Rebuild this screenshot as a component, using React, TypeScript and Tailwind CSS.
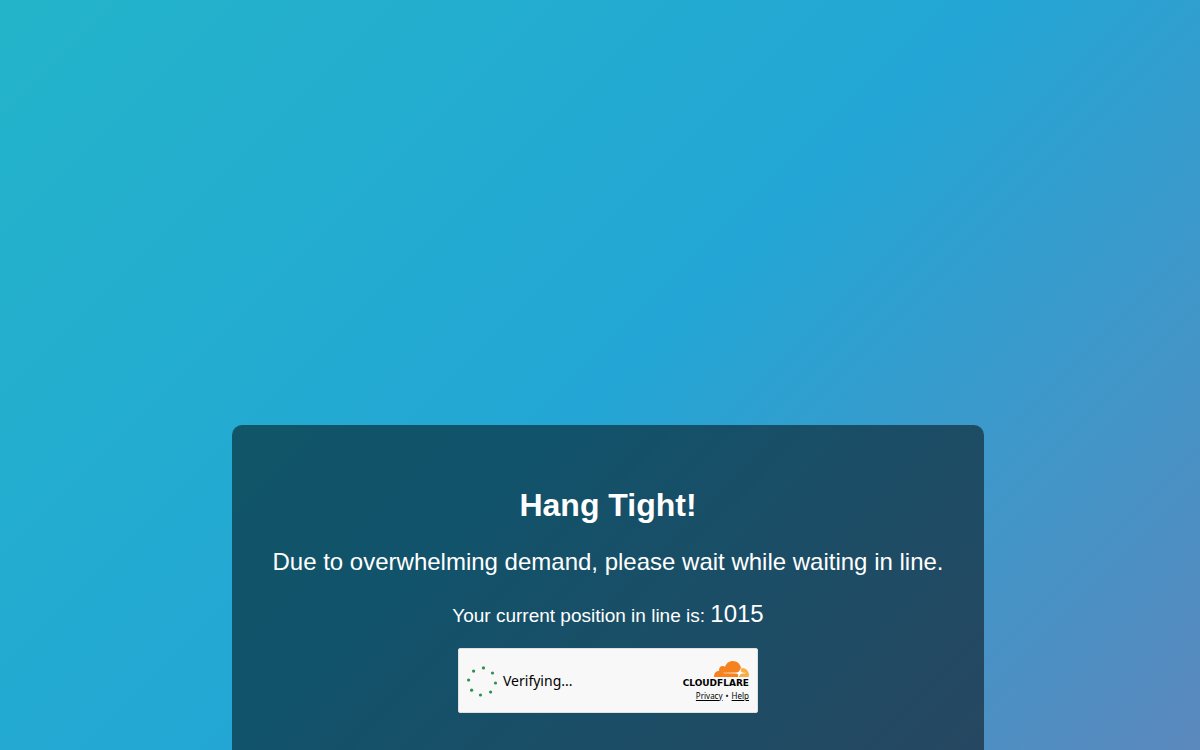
const dots: [number, number][] = [
  [16.5, 1.9],
  [25.5, 7],
  [28.5, 17],
  [23.6, 26],
  [13.5, 29],
  [4.6, 24.2],
  [1.6, 14],
  [6.6, 5.1],
];

function Spinner() {
  return (
    <svg width="30" height="30" viewBox="0 0 30 30" className="shrink-0 overflow-visible" aria-hidden="true">
      {dots.map(([x, y]) => (
        <circle key={`${x}-${y}`} cx={x} cy={y} r="1.6" fill="#2b9151" />
      ))}
    </svg>
  );
}

function CloudLogo() {
  return (
    <svg width="35" height="16" viewBox="38 0 35 16" aria-hidden="true">
      <path
        fill="#F6821F"
        d="M61.8848 15.7841L62.0632 15.1578C62.2758 14.4126 62.1967 13.7239 61.8401 13.2178C61.5118 12.7517 60.9649 12.4773 60.3007 12.4453L47.7201 12.2836C47.6811 12.2829 47.6428 12.2728 47.6083 12.2542C47.5738 12.2356 47.5442 12.209 47.5217 12.1766C47.4996 12.1431 47.4856 12.1049 47.4807 12.0649C47.4758 12.025 47.4801 11.9844 47.4933 11.9465C47.5149 11.8839 47.5541 11.8291 47.6061 11.7888C47.658 11.7486 47.7204 11.7247 47.7856 11.7201L60.4827 11.5566C61.9889 11.4864 63.6196 10.2462 64.1905 8.73372L64.9146 6.81361C64.9443 6.73242 64.951 6.64444 64.9341 6.55957C64.112 2.80652 60.8115 0 56.8652 0C53.2293 0 50.1421 2.38158 49.0347 5.69186C48.2864 5.12186 47.3535 4.85982 46.4228 4.95823C44.6785 5.13401 43.276 6.55928 43.1034 8.32979C43.059 8.77189 43.0915 9.21845 43.1992 9.64918C40.3497 9.73347 38.0645 12.1027 38.0645 15.0151C38.0649 15.2751 38.0838 15.5347 38.1212 15.7919C38.1294 15.8513 38.1584 15.9057 38.2029 15.9452C38.2474 15.9847 38.3044 16.0067 38.3635 16.0071L61.5894 16.0099C61.6616 16.0088 61.7252 15.9862 61.7772 15.9455C61.8293 15.9048 61.867 15.8481 61.8848 15.7841Z"
      />
      <path
        fill="#FBAD41"
        d="M66.0758 6.95285C65.9592 6.95285 65.843 6.95582 65.7274 6.96177C65.7087 6.96312 65.6904 6.96719 65.6729 6.97385C65.6426 6.98437 65.6152 7.00219 65.5931 7.02579C65.5711 7.04939 65.555 7.07806 65.5462 7.10936L65.0515 8.84333C64.8389 9.58847 64.918 10.2766 65.2749 10.7827C65.6029 11.2494 66.1498 11.5233 66.814 11.5552L69.4959 11.7186C69.5336 11.7199 69.5705 11.73 69.6037 11.7483C69.6369 11.7666 69.6654 11.7925 69.687 11.8239C69.7092 11.8576 69.7234 11.896 69.7283 11.9363C69.7332 11.9765 69.7288 12.0173 69.7153 12.0555C69.6937 12.118 69.6546 12.1727 69.6028 12.2129C69.5509 12.2531 69.4887 12.2771 69.4236 12.2819L66.6371 12.4453C65.1241 12.5161 63.4937 13.7558 62.9233 15.2682L62.722 15.8022C62.7136 15.8245 62.7105 15.8486 62.713 15.8724C62.7155 15.8961 62.7236 15.9189 62.7365 15.9389C62.7495 15.9589 62.7669 15.9754 62.7874 15.9873C62.8079 15.9991 62.831 16.0058 62.8546 16.0068H72.4502C72.506 16.0073 72.5604 15.9893 72.6051 15.9554C72.6498 15.9216 72.6823 15.8739 72.6977 15.8195C72.8677 15.2043 72.9535 14.5684 72.9529 13.9296C72.9517 10.0767 69.8732 6.95285 66.0758 6.95285Z"
      />
      <path fill="#fff" d="M63.6 9l.6 2.4 3 .6-3 .7-.9 2.6-.7-2.6-2.6-.7 2.7-.6Z" />
    </svg>
  );
}

function VerifyWidget() {
  return (
    <div className="mx-auto flex h-[65px] w-[300px] items-center justify-between rounded-xs border border-[#e0e0e0] bg-[#f8f8f8] px-2 font-['Noto_Sans',sans-serif] text-[#232323]">
      <div className="flex items-center gap-1.5" role="status">
        <Spinner />
        <span className="text-sm text-black">Verifying...</span>
      </div>
      <div className="flex flex-col items-end">
        <CloudLogo />
        <span className="mt-px font-['DejaVu_Sans',sans-serif] text-[9px] leading-[10px] font-bold text-black">
          CLOUDFLARE
        </span>
        <div className="mt-0.5 flex gap-[3px] text-[8px] leading-[11px] text-black">
          <a href="#privacy" className="underline">Privacy</a>
          <span>•</span>
          <a href="#help" className="underline">Help</a>
        </div>
      </div>
    </div>
  );
}

export default function App() {
  return (
    <div className="h-screen overflow-hidden bg-[linear-gradient(135deg,#23b4c9_0%,#23a6d5_51%,#5b88bd_100%)] pl-4 font-['Liberation_Sans',Arial,sans-serif] text-white">
      <main className="mx-auto mt-[425px] w-fit rounded-[10px] bg-black/50 px-10 pt-[62px] pb-16 text-center">
        <h1 className="text-[32px] leading-[37px] font-bold">Hang Tight!</h1>
        <p className="mt-6 text-2xl leading-7">Due to overwhelming demand, please wait while waiting in line.</p>
        <p className="mt-6 mb-[18px] text-[19px] leading-7">
          Your current position in line is: <span className="text-2xl leading-7">1015</span>
        </p>
        <VerifyWidget />
      </main>
    </div>
  );
}
